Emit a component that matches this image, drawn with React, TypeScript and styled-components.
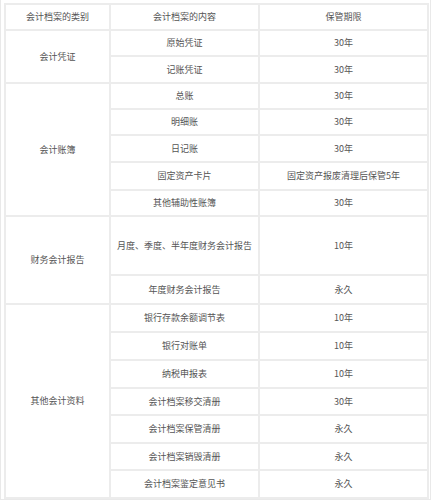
import React from 'react'
import styled, { createGlobalStyle } from 'styled-components'

const GlobalStyle = createGlobalStyle`
  html, body {
    margin: 0;
    padding: 0;
    background: #fff;
  }
  body {
    font-family: "Noto Sans CJK SC", "Noto Sans", sans-serif;
  }
`

type Item = { name: string; period: string; height: number }
type Group = { category: string; items: Item[] }

const groups: Group[] = [
  {
    category: '会计凭证',
    items: [
      { name: '原始凭证', period: '30年', height: 26 },
      { name: '记账凭证', period: '30年', height: 27 },
    ],
  },
  {
    category: '会计账簿',
    items: [
      { name: '总账', period: '30年', height: 26 },
      { name: '明细账', period: '30年', height: 26 },
      { name: '日记账', period: '30年', height: 27 },
      { name: '固定资产卡片', period: '固定资产报废清理后保管5年', height: 28 },
      { name: '其他辅助性账簿', period: '30年', height: 26 },
    ],
  },
  {
    category: '财务会计报告',
    items: [
      { name: '月度、季度、半年度财务会计报告', period: '10年', height: 59 },
      { name: '年度财务会计报告', period: '永久', height: 29 },
    ],
  },
  {
    category: '其他会计资料',
    items: [
      { name: '银行存款余额调节表', period: '10年', height: 28 },
      { name: '银行对账单', period: '10年', height: 28 },
      { name: '纳税申报表', period: '10年', height: 28 },
      { name: '会计档案移交清册', period: '30年', height: 27 },
      { name: '会计档案保管清册', period: '永久', height: 28 },
      { name: '会计档案销毁清册', period: '永久', height: 27 },
      { name: '会计档案鉴定意见书', period: '永久', height: 28 },
    ],
  },
]

const Frame = styled.div`
  box-sizing: border-box;
  width: 431px;
  height: 500px;
  border: 1px solid #e9e9e9;
  border-top: none;
  padding: 3px 3px 0 3px;
`

const Table = styled.table`
  width: 423px;
  border-collapse: collapse;
  table-layout: fixed;
  color: #555;
  font-size: 9px;
  line-height: 12px;
`

const Row = styled.tr<{ $h: number }>`
  height: ${p => p.$h}px;
`

const Cell = styled.td`
  border: 2px solid #ececec;
  padding: 0 4px;
  text-align: center;
  vertical-align: middle;
  white-space: nowrap;
`

const HeadCell = styled(Cell).attrs({ as: 'th' })`
  font-weight: normal;
`

export default function App() {
  return (
    <>
      <GlobalStyle />
      <Frame>
        <Table>
          <colgroup>
            <col style={{ width: 105 }} />
            <col style={{ width: 149 }} />
            <col style={{ width: 169 }} />
          </colgroup>
          <thead>
            <Row $h={26}>
              <HeadCell>会计档案的类别</HeadCell>
              <HeadCell>会计档案的内容</HeadCell>
              <HeadCell>保管期限</HeadCell>
            </Row>
          </thead>
          <tbody>
            {groups.map(g =>
              g.items.map((it, i) => (
                <Row key={g.category + it.name} $h={it.height}>
                  {i === 0 && <Cell rowSpan={g.items.length}>{g.category}</Cell>}
                  <Cell>{it.name}</Cell>
                  <Cell>{it.period}</Cell>
                </Row>
              ))
            )}
          </tbody>
        </Table>
      </Frame>
    </>
  )
}
